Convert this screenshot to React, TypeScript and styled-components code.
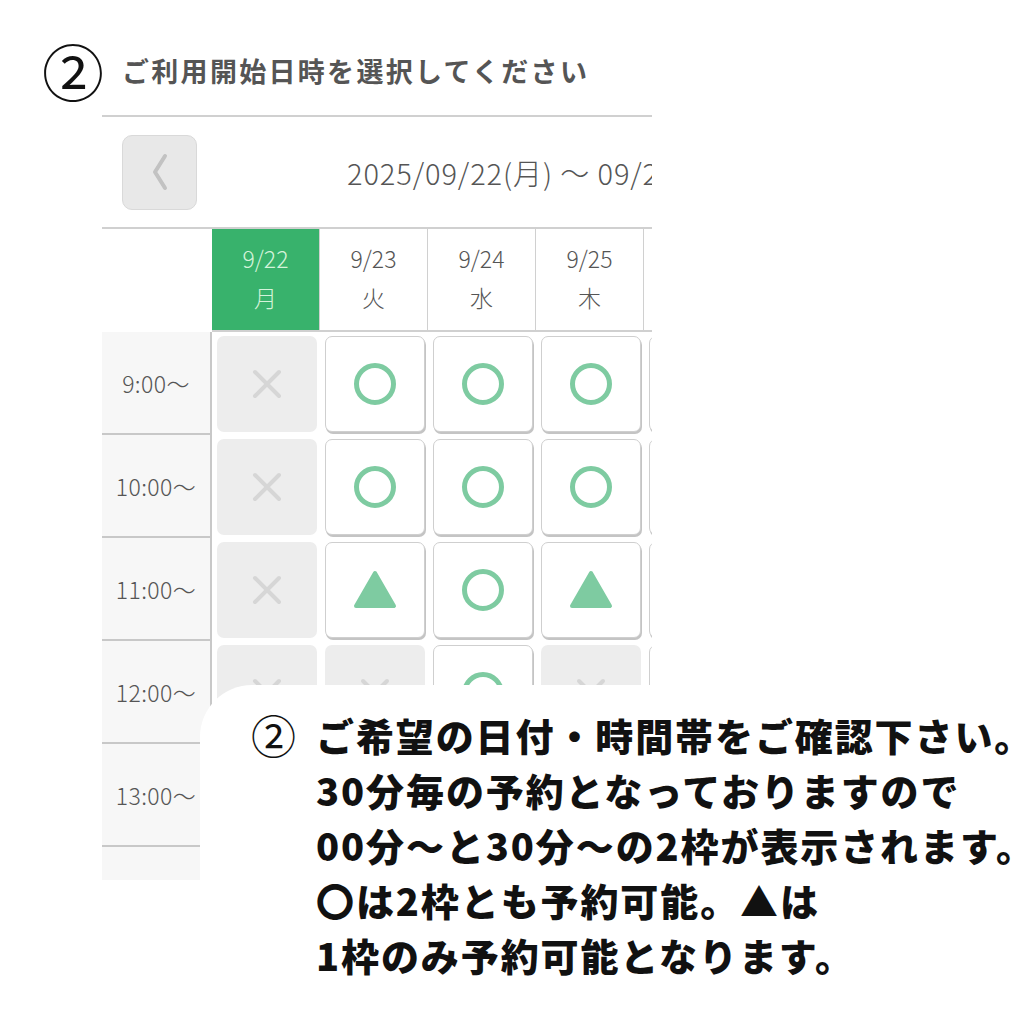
import styled, { createGlobalStyle } from "styled-components";

const GlobalStyle = createGlobalStyle`
    body {
        margin: 0;
        background: #ffffff;
        font-family: "Noto Sans CJK JP", "Noto Sans", sans-serif;
    }
`

const Page = styled.div`
    position: relative;
    width: 1024px;
    height: 1024px;
    overflow: hidden;
    background: #ffffff;
`

const Header = styled.header`
    display: flex;
    align-items: center;
    height: 78px;
    padding: 31px 0 0 42px;
    box-sizing: content-box;
`

const StepMark = styled.span`
    font-size: 62px;
    line-height: 1;
    color: #111;
    font-weight: 400;
`

const Title = styled.h1`
    margin: 0 0 0 18px;
    font-size: 27px;
    font-weight: 700;
    color: #555;
    letter-spacing: 2.3px;
`

const Calendar = styled.section`
    margin: 6px 0 0 102px;
    width: 550px;
    height: 763px;
    overflow: hidden;
    border-top: 2px solid #d0d0d0;
`

const Nav = styled.div`
    display: flex;
    align-items: center;
    height: 110px;
    padding-left: 20px;
`

const PrevButton = styled.button`
    display: flex;
    flex-shrink: 0;
    align-items: center;
    justify-content: center;
    width: 75px;
    height: 75px;
    padding: 0;
    border: 1.5px solid #d9d9d9;
    border-radius: 10px;
    background: #e8e8e8;
`

const RangeText = styled.div`
    margin-left: 150px;
    font-size: 29px;
    font-weight: 300;
    color: #555;
    white-space: nowrap;
    letter-spacing: 0.9px;
`

const Grid = styled.div`
    display: grid;
    grid-template-columns: 110px repeat(5, 108px);
    grid-auto-rows: 103px;
    border-top: 2px solid #d0d0d0;
`

const Corner = styled.div`
    height: 103px;
`

const DayHead = styled.div<{ $active?: boolean }>`
    display: flex;
    flex-direction: column;
    align-items: center;
    justify-content: center;
    background: ${({ $active }) => ($active ? "#38b26c" : "#ffffff")};
    color: ${({ $active }) => ($active ? "#d4f3da" : "#555")};
    border-right: 1.5px solid #d0d0d0;
    border-bottom: 2px solid #d0d0d0;
    font-size: 23px;
    font-weight: 300;
    line-height: 39px;
    padding-bottom: 4px;
`

const TimeCell = styled.div`
    display: flex;
    align-items: center;
    justify-content: center;
    background: #f7f7f7;
    border-right: 2px solid #c8c8c8;
    border-bottom: 2px solid #c8c8c8;
    font-size: 23px;
    font-weight: 300;
    color: #555;
    letter-spacing: 0.4px;
`

const SlotWrap = styled.div`
    padding: 4px 3px 3px 5px;
`

const Slot = styled.div<{ $open?: boolean }>`
    display: flex;
    align-items: center;
    justify-content: center;
    height: 100%;
    box-sizing: border-box;
    border-radius: 7px;
    background: ${({ $open }) => ($open ? "#ffffff" : "#ededed")};
    border: ${({ $open }) => ($open ? "1.5px solid #cfcfcf" : "none")};
    box-shadow: ${({ $open }) => ($open ? "1px 2px 0 #c4c4c4" : "none")};
`

const Overlay = styled.div`
    position: absolute;
    left: 200px;
    top: 685px;
    right: 0;
    bottom: 0;
    display: flex;
    padding: 22px 0 0 51px;
    background: #ffffff;
    border-top-left-radius: 52px;
`

const NoteMark = styled.span`
    flex-shrink: 0;
    width: 65px;
    font-size: 45px;
    line-height: 55px;
    font-weight: 400;
    color: #111;
`

const NoteLines = styled.div`
    font-size: 38px;
    line-height: 55px;
    font-weight: 900;
    color: #111;
    white-space: nowrap;
    letter-spacing: 1.9px;
`

type Status = "o" | "t" | "x"

const days = [
    { date: "9/22", wd: "月", active: true },
    { date: "9/23", wd: "火" },
    { date: "9/24", wd: "水" },
    { date: "9/25", wd: "木" },
    { date: "9/26", wd: "金" },
]

const rows: { time: string; slots: Status[] }[] = [
    { time: "9:00〜", slots: ["x", "o", "o", "o", "o"] },
    { time: "10:00〜", slots: ["x", "o", "o", "o", "o"] },
    { time: "11:00〜", slots: ["x", "t", "o", "t", "o"] },
    { time: "12:00〜", slots: ["x", "x", "o", "x", "o"] },
    { time: "13:00〜", slots: ["x", "o", "o", "o", "o"] },
    { time: "14:00〜", slots: ["x", "o", "o", "o", "o"] },
]

function Mark({ status }: { status: Status }) {
    if (status === "o") {
        return (
            <svg width="46" height="46" viewBox="0 0 46 46">
                <circle cx="23" cy="23" r="18.5" fill="none" stroke="#7ecba1" strokeWidth="5" />
            </svg>
        )
    }
    if (status === "t") {
        return (
            <svg width="46" height="42" viewBox="0 0 46 42">
                <path d="M23 4 L42 37 L4 37 Z" fill="#7ecba1" stroke="#7ecba1" strokeWidth="4" strokeLinejoin="round" />
            </svg>
        )
    }
    return (
        <svg width="32" height="32" viewBox="0 0 32 32">
            <path d="M4 4 L28 28 M28 4 L4 28" stroke="#d6d6d6" strokeWidth="4" strokeLinecap="round" />
        </svg>
    )
}

function ChevronLeft() {
    return (
        <svg width="22" height="40" viewBox="0 0 22 40">
            <path d="M16 4 L6 20 L16 36" fill="none" stroke="#c2c2c2" strokeWidth="4" strokeLinecap="round" strokeLinejoin="round" />
        </svg>
    )
}

export default function App() {
    return (
        <Page>
            <GlobalStyle />
            <Header>
                <StepMark>②</StepMark>
                <Title>ご利用開始日時を選択してください</Title>
            </Header>

            <Calendar>
                <Nav>
                    <PrevButton aria-label="前の週">
                        <ChevronLeft />
                    </PrevButton>
                    <RangeText>2025/09/22(月) 〜 09/28(日)</RangeText>
                </Nav>

                <Grid>
                    <Corner />
                    {days.map((d) => (
                        <DayHead key={d.date} $active={d.active}>
                            <span>{d.date}</span>
                            <span>{d.wd}</span>
                        </DayHead>
                    ))}

                    {rows.map((row) => (
                        <>
                            <TimeCell key={row.time}>{row.time}</TimeCell>
                            {row.slots.map((s, i) => (
                                <SlotWrap key={row.time + i}>
                                    <Slot $open={s !== "x"}>
                                        <Mark status={s} />
                                    </Slot>
                                </SlotWrap>
                            ))}
                        </>
                    ))}
                </Grid>
            </Calendar>

            <Overlay>
                <NoteMark>②</NoteMark>
                <NoteLines>
                    <div>ご希望の日付・時間帯をご確認下さい。</div>
                    <div>30分毎の予約となっておりますので</div>
                    <div>00分〜と30分〜の2枠が表示されます。</div>
                    <div>〇は2枠とも予約可能。▲は</div>
                    <div>1枠のみ予約可能となります。</div>
                </NoteLines>
            </Overlay>
        </Page>
    )
}
